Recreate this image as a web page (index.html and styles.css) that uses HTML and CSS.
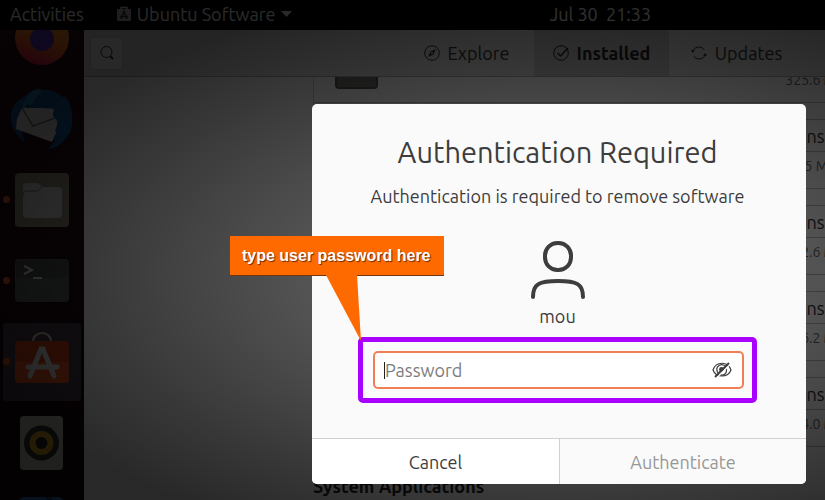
FILE: index.html
```html
<!DOCTYPE html>
<html lang="en">

<head>
    <meta charset="utf-8">
    <title>Ubuntu Software</title>
    <link rel="stylesheet" href="styles.css">
</head>

<body>
    <div class="desktop">
        <header class="topbar">
            <button class="topbar-item activities" type="button">Activities</button>
            <button class="topbar-item app-menu" type="button">
                <svg width="16" height="16" viewBox="0 0 16 16">
                    <path d="M5 3V1.5h6V3" fill="none" stroke="#ddd" stroke-width="1.5" />
                    <rect x="1" y="3" width="14" height="12" rx="1" fill="#bbb" />
                    <path d="M5 13l3-8 3 8M4 10.500h8" fill="none" stroke="#333" stroke-width="1.500" />
                </svg>
                Ubuntu Software
                <svg width="11" height="6" viewBox="0 0 11 6"><path d="M0 0h11L5.500 6z" fill="#fff" /></svg>
            </button>
            <time class="clock">Jul 30&nbsp; 21:33</time>
        </header>

        <div class="workspace">
            <nav class="dock">
                <ul>
                    <li>
                        <svg width="54" height="54" viewBox="0 0 54 54">
                            <defs>
                                <linearGradient id="fox" x1="0.7" y1="0" x2="0.4" y2="1">
                                    <stop offset="0" stop-color="#ffb82e" />
                                    <stop offset="0.6" stop-color="#ff6a1f" />
                                    <stop offset="1" stop-color="#e3124f" />
                                </linearGradient>
                            </defs>
                            <circle cx="27" cy="27" r="27" fill="url(#fox)" />
                            <circle cx="27" cy="28" r="12" fill="#5a32b8" />
                        </svg>
                    </li>
                    <li>
                        <svg width="62" height="62" viewBox="0 0 62 62">
                            <path d="M14 8C20 3 25 0 30 2c18-2 31 12 31 29 0 18-12 29-24 30l7-8-35-13 5 14C5 48 0 39 0 29 0 19 6 12 14 8z" fill="#114f91" />
                            <path d="M12 16C16 6 23 0 31 2c-2 5-6 6-8 11-2 4-6 5-11 13z" fill="#1c78b5" />
                            <path d="M11 20l-5 11-1 10 36 13 6-14-2-19-14-1z" fill="#d9d9d9" />
                            <path d="M11 20l11 18 22-8" fill="none" stroke="#777" stroke-width="1.500" />
                            <path d="M43 17l11-9c8 10 9 25 5 37L45 58l4-10-5-5 3-9-5-6z" fill="#12579a" />
                            <circle cx="17" cy="18" r="1.500" fill="#111" />
                        </svg>
                    </li>
                    <li class="running">
                        <svg width="54" height="54" viewBox="0 0 54 54">
                            <rect width="54" height="54" rx="4" fill="#8c8878" />
                            <path d="M8 14q0-4 4-4h10q2 0 3 2l2 2h16q4 0 4 4v23q0 4-4 4H12q-4 0-4-4z" fill="#ccc" />
                            <path d="M8 22q0-4 4-4h11l4-4" fill="none" stroke="#777" />
                        </svg>
                    </li>
                    <li class="running">
                        <svg width="54" height="43" viewBox="0 0 54 43">
                            <rect width="54" height="43" rx="4" fill="#565b5a" />
                            <path d="M4 1h46q3 0 3 3v15H1V4q0-3 3-3z" fill="#484b4b" />
                            <path d="M9 7l8 4-8 4M18 19h9" fill="none" stroke="#ddd" stroke-width="2" />
                        </svg>
                    </li>
                    <li class="running active">
                        <svg width="54" height="54" viewBox="0 0 54 54">
                            <path d="M18 12c0-12 18-12 18 0" fill="none" stroke="#d8ccb0" stroke-width="2" />
                            <rect y="11" width="54" height="42" rx="4" fill="#e95420" />
                            <path d="M4 11h46q4 0 4 4v17H0V15q0-4 4-4z" fill="#cd3f12" />
                            <path d="M15 46l11-27h2l11 27M13 37h29" fill="none" stroke="#ddd" stroke-width="5" stroke-linecap="round" />
                        </svg>
                    </li>
                    <li>
                        <svg width="43" height="54" viewBox="0 0 43 54">
                            <rect width="43" height="54" rx="4" fill="#c8c7bf" />
                            <circle cx="21.500" cy="27" r="17.500" fill="#333" />
                            <circle cx="21.500" cy="27" r="12" fill="#d9a91e" />
                            <circle cx="21.500" cy="27" r="6" fill="#222" />
                        </svg>
                    </li>
                    <li>
                        <svg width="43" height="54" viewBox="0 0 43 54">
                            <rect width="43" height="54" rx="4" fill="#2b64b5" />
                            <path d="M26 0v8h6V0z" fill="#183c78" />
                        </svg>
                    </li>
                </ul>
            </nav>

            <main class="window">
                <div class="headerbar">
                    <button class="search" type="button" aria-label="Search">
                        <svg width="16" height="16" viewBox="0 0 16 16" fill="none" stroke="#333">
                            <circle cx="7.500" cy="7" r="5.500" />
                            <path d="M11 11l3 3" stroke-width="2" />
                        </svg>
                    </button>
                    <nav class="tabs">
                        <a href="#explore">
                            <svg width="16" height="16" viewBox="0 0 16 16">
                                <circle cx="8" cy="8" r="7.300" fill="none" stroke="#333" />
                                <path d="M12 4L9.500 9.500 4 12l2.500-5.500z" fill="#333" />
                                <circle cx="8" cy="8" r="1" fill="#ddd" />
                            </svg>
                            Explore
                        </a>
                        <a class="current" href="#installed">
                            <svg width="16" height="16" viewBox="0 0 16 16" fill="none" stroke="#222">
                                <circle cx="8" cy="8" r="7.300" />
                                <path d="M4.500 8l3 3L15 3" stroke-width="1.500" />
                            </svg>
                            Installed
                        </a>
                        <a href="#updates">
                            <svg width="16" height="16" viewBox="0 0 16 16" fill="none" stroke="#333">
                                <path d="M1.500 6.500a6.700 6.700 0 0 1 12-1.500M14.500 9.500a6.700 6.700 0 0 1-12 1.500" />
                                <path d="M0 5l1.500 3L4 5.500zM16 11l-1.500-3L12 10.500z" fill="#333" stroke="none" />
                            </svg>
                            Updates
                        </a>
                    </nav>
                </div>

                <section class="installed">
                    <ul class="apps">
                        <li>
                            <span class="app-icon"></span>
                            <div class="actions"><button type="button">Uninstall</button><span>325.6 MB</span></div>
                        </li>
                        <li>
                            <div class="actions"><button type="button">Uninstall</button><span>9.5 MB</span></div>
                        </li>
                        <li>
                            <div class="actions"><button type="button">Uninstall</button><span>112.6 MB</span></div>
                        </li>
                        <li>
                            <div class="actions"><button type="button">Uninstall</button><span>106.2 MB</span></div>
                        </li>
                        <li>
                            <div class="actions"><button type="button">Uninstall</button><span>114.0 MB</span></div>
                        </li>
                    </ul>
                    <h2>System Applications</h2>
                </section>
            </main>
        </div>
    </div>

    <div class="shade">
        <form class="dialog" role="dialog" aria-labelledby="title">
            <div class="dialog-body">
                <h1 id="title">Authentication Required</h1>
                <p>Authentication is required to remove software</p>
                <svg class="avatar" width="56" height="60" viewBox="0 0 56 60" fill="none" stroke="#3d3d3d" stroke-width="4" stroke-linecap="round">
                    <rect x="15" y="3" width="26" height="27" rx="12.500" />
                    <path d="M3 57C3 44 9 41 28 41s25 3 25 16" />
                </svg>
                <label for="password">mou</label>
                <div class="highlight">
                    <div class="field">
                        <span class="caret"></span>
                        <input id="password" type="password" placeholder="Password">
                        <button class="reveal" type="button" aria-label="Show password">
                            <svg width="20" height="18" viewBox="0 0 20 18" fill="none" stroke="#3d3d3d" stroke-width="1.200">
                                <path d="M1 9c3-9 15-9 18 0-3 8-15 8-18 0z" />
                                <path d="M6 12c-4-7 4-11 8-6M14 7c2 5-3 9-6 6" />
                                <circle cx="9.500" cy="8.500" r="1.800" fill="#3d3d3d" />
                                <path d="M4.500 17L18.500 3" stroke="#fff" />
                                <path d="M3 16L17 2" stroke-width="2" />
                            </svg>
                        </button>
                    </div>
                    <div class="callout">
                        <span>type user password here</span>
                        <svg width="36" height="68" viewBox="0 0 36 68">
                            <path d="M0 0h31l4 66z" fill="#ff6a00" />
                        </svg>
                    </div>
                </div>
            </div>
            <div class="dialog-buttons">
                <button type="button">Cancel</button>
                <button type="submit" disabled>Authenticate</button>
            </div>
        </form>
    </div>
</body>

</html>
```

FILE: styles.css
```css
* {
    box-sizing: border-box;
}

body {
    margin: 0;
    font-family: Ubuntu, "Noto Sans", sans-serif;
    font-size: 18px;
    color: #3d3d3d;
}

button,
input {
    font: inherit;
    color: inherit;
    border: none;
    background: none;
    padding: 0;
}

ul {
    list-style: none;
    margin: 0;
    padding: 0;
}

svg {
    display: block;
    flex: none;
}

/* desktop */

.desktop {
    height: 100vh;
    display: flex;
    flex-direction: column;
    overflow: hidden;
    background: #1c0712;
}

.topbar {
    display: flex;
    align-items: center;
    height: 30px;
    flex: none;
    padding: 0 10px 3px;
    background: #000;
    color: #fff;
}

.topbar-item {
    display: flex;
    align-items: center;
    gap: 5px;
}

.app-menu {
    margin-left: 32px;
}

.clock {
    margin: 0 auto;
    padding-left: 94px;
}

.workspace {
    display: flex;
    flex: 1;
    min-height: 0;
}

/* dock */

.dock {
    width: 84px;
    flex: none;
    overflow: hidden;
    background: linear-gradient(#280a12, #16060f);
}

.dock ul {
    margin-top: -33px;
}

.dock li {
    position: relative;
    display: flex;
    align-items: center;
    justify-content: center;
    height: 81px;
    margin-right: 1px;
}

.dock .running::before {
    content: "";
    position: absolute;
    left: 3px;
    width: 7px;
    height: 7px;
    border-radius: 50%;
    background: #e95420;
}

.dock .active svg {
    box-sizing: content-box;
    padding: 7px 12px 17px;
    border-radius: 4px;
    background: #443843;
}

/* software window */

.window {
    flex: 1;
    min-width: 0;
    display: flex;
    flex-direction: column;
    background: #fafafa;
}

.headerbar {
    display: flex;
    align-items: center;
    justify-content: space-between;
    flex: none;
    height: 47px;
    padding: 0 21px 0 6px;
    background: #dfdfdf;
    border-bottom: 1px solid #aaa;
}

.search {
    display: grid;
    place-items: center;
    width: 33px;
    height: 33px;
    border: 1px solid #ccc;
    border-radius: 4px;
    background: #f6f6f6;
}

.tabs {
    display: flex;
    align-self: stretch;
}

.tabs a {
    display: flex;
    align-items: center;
    justify-content: center;
    gap: 8px;
    width: 135px;
    color: #333;
    text-decoration: none;
}

.tabs .current {
    background: #c4c4c4;
    color: #222;
    font-weight: bold;
}

.installed {
    flex: 1;
    min-height: 0;
    overflow: hidden;
    padding-left: 229px;
}

.apps {
    margin: -60px -68px 0 0;
    border-left: 1px solid #ccc;
}

.apps li {
    display: flex;
    height: 86px;
    padding: 16px 24px 0 21px;
    border-bottom: 1px solid #bbb;
}

.app-icon {
    width: 43px;
    height: 56px;
    border: 2px solid #555;
    border-radius: 4px;
    background: #73736c;
}

.actions {
    display: flex;
    flex-direction: column;
    align-items: center;
    gap: 4px;
    width: 108px;
    margin-left: auto;
    font-size: 14px;
    line-height: 20px;
    color: #666;
}

.actions button {
    width: 100%;
    height: 33px;
    border: 1px solid #bbb;
    border-radius: 4px;
    color: #333;
    font-size: 18px;
}

.installed h2 {
    margin: 27px 0 0;
    font-size: 18px;
    line-height: 24px;
    color: #222;
}

/* modal */

.shade {
    position: absolute;
    inset: 0;
    display: grid;
    place-items: center;
    padding: 88px 0 0 293px;
    background: radial-gradient(600px 290px at 560px 275px, rgba(0, 0, 0, 0.64), rgba(0, 0, 0, 0.67) 43%, rgba(0, 0, 0, 0.78) 79%, rgba(0, 0, 0, 0.84) 100%);
}

.dialog {
    width: 494px;
    border-radius: 5px;
    background: #fafafa;
}

.dialog-body {
    display: flex;
    flex-direction: column;
    align-items: center;
    padding: 28px 49px 35px 46px;
}

.dialog h1 {
    margin: 0;
    font-size: 29px;
    line-height: 40px;
    font-weight: normal;
}

.dialog p {
    margin: 12px 0 0;
    line-height: 24px;
}

.avatar {
    margin-top: 32px;
}

.dialog label {
    margin: 4px 0 9px;
    line-height: 24px;
}

.highlight {
    position: relative;
    width: 100%;
    max-width: 399px;
    padding: 9px 8px 9px 10px;
    border: 5px solid #a900ff;
    border-radius: 5px;
}

.field {
    display: flex;
    align-items: center;
    height: 38px;
    padding: 0 10px 0 9px;
    border: 2px solid #f07f58;
    border-radius: 5px;
    background: #fff;
}

.caret {
    width: 1px;
    height: 17px;
    background: #222;
}

.field input {
    flex: 1;
    min-width: 0;
    outline: none;
}

.field input::placeholder {
    color: #7c7c7c;
}

.dialog-buttons {
    display: grid;
    grid-template-columns: 1fr 1fr;
    border-top: 1px solid #d0d0d0;
}

.dialog-buttons button {
    height: 45px;
    background: #fff;
    border-radius: 0 0 0 5px;
}

.dialog-buttons button + button {
    background: #fafafa;
    border-left: 1px solid #d0d0d0;
    border-radius: 0 0 5px 0;
}

.dialog-buttons button:disabled {
    color: #979797;
}

/* annotation pointing at the password box */

.callout {
    position: absolute;
    left: -133px;
    top: -106px;
    font: bold 16px/39px "Liberation Sans", Arial, sans-serif;
    color: #fff;
    text-shadow: 1px 1px 1px rgba(0, 0, 0, 0.6);
    white-space: nowrap;
    pointer-events: none;
}

.callout span {
    display: block;
    padding: 0 13px 0 12px;
    background: #ff6a00;
    box-shadow: 0 1px 0 #703614;
}

.callout svg {
    position: relative;
    margin-left: 96px;
}
```
